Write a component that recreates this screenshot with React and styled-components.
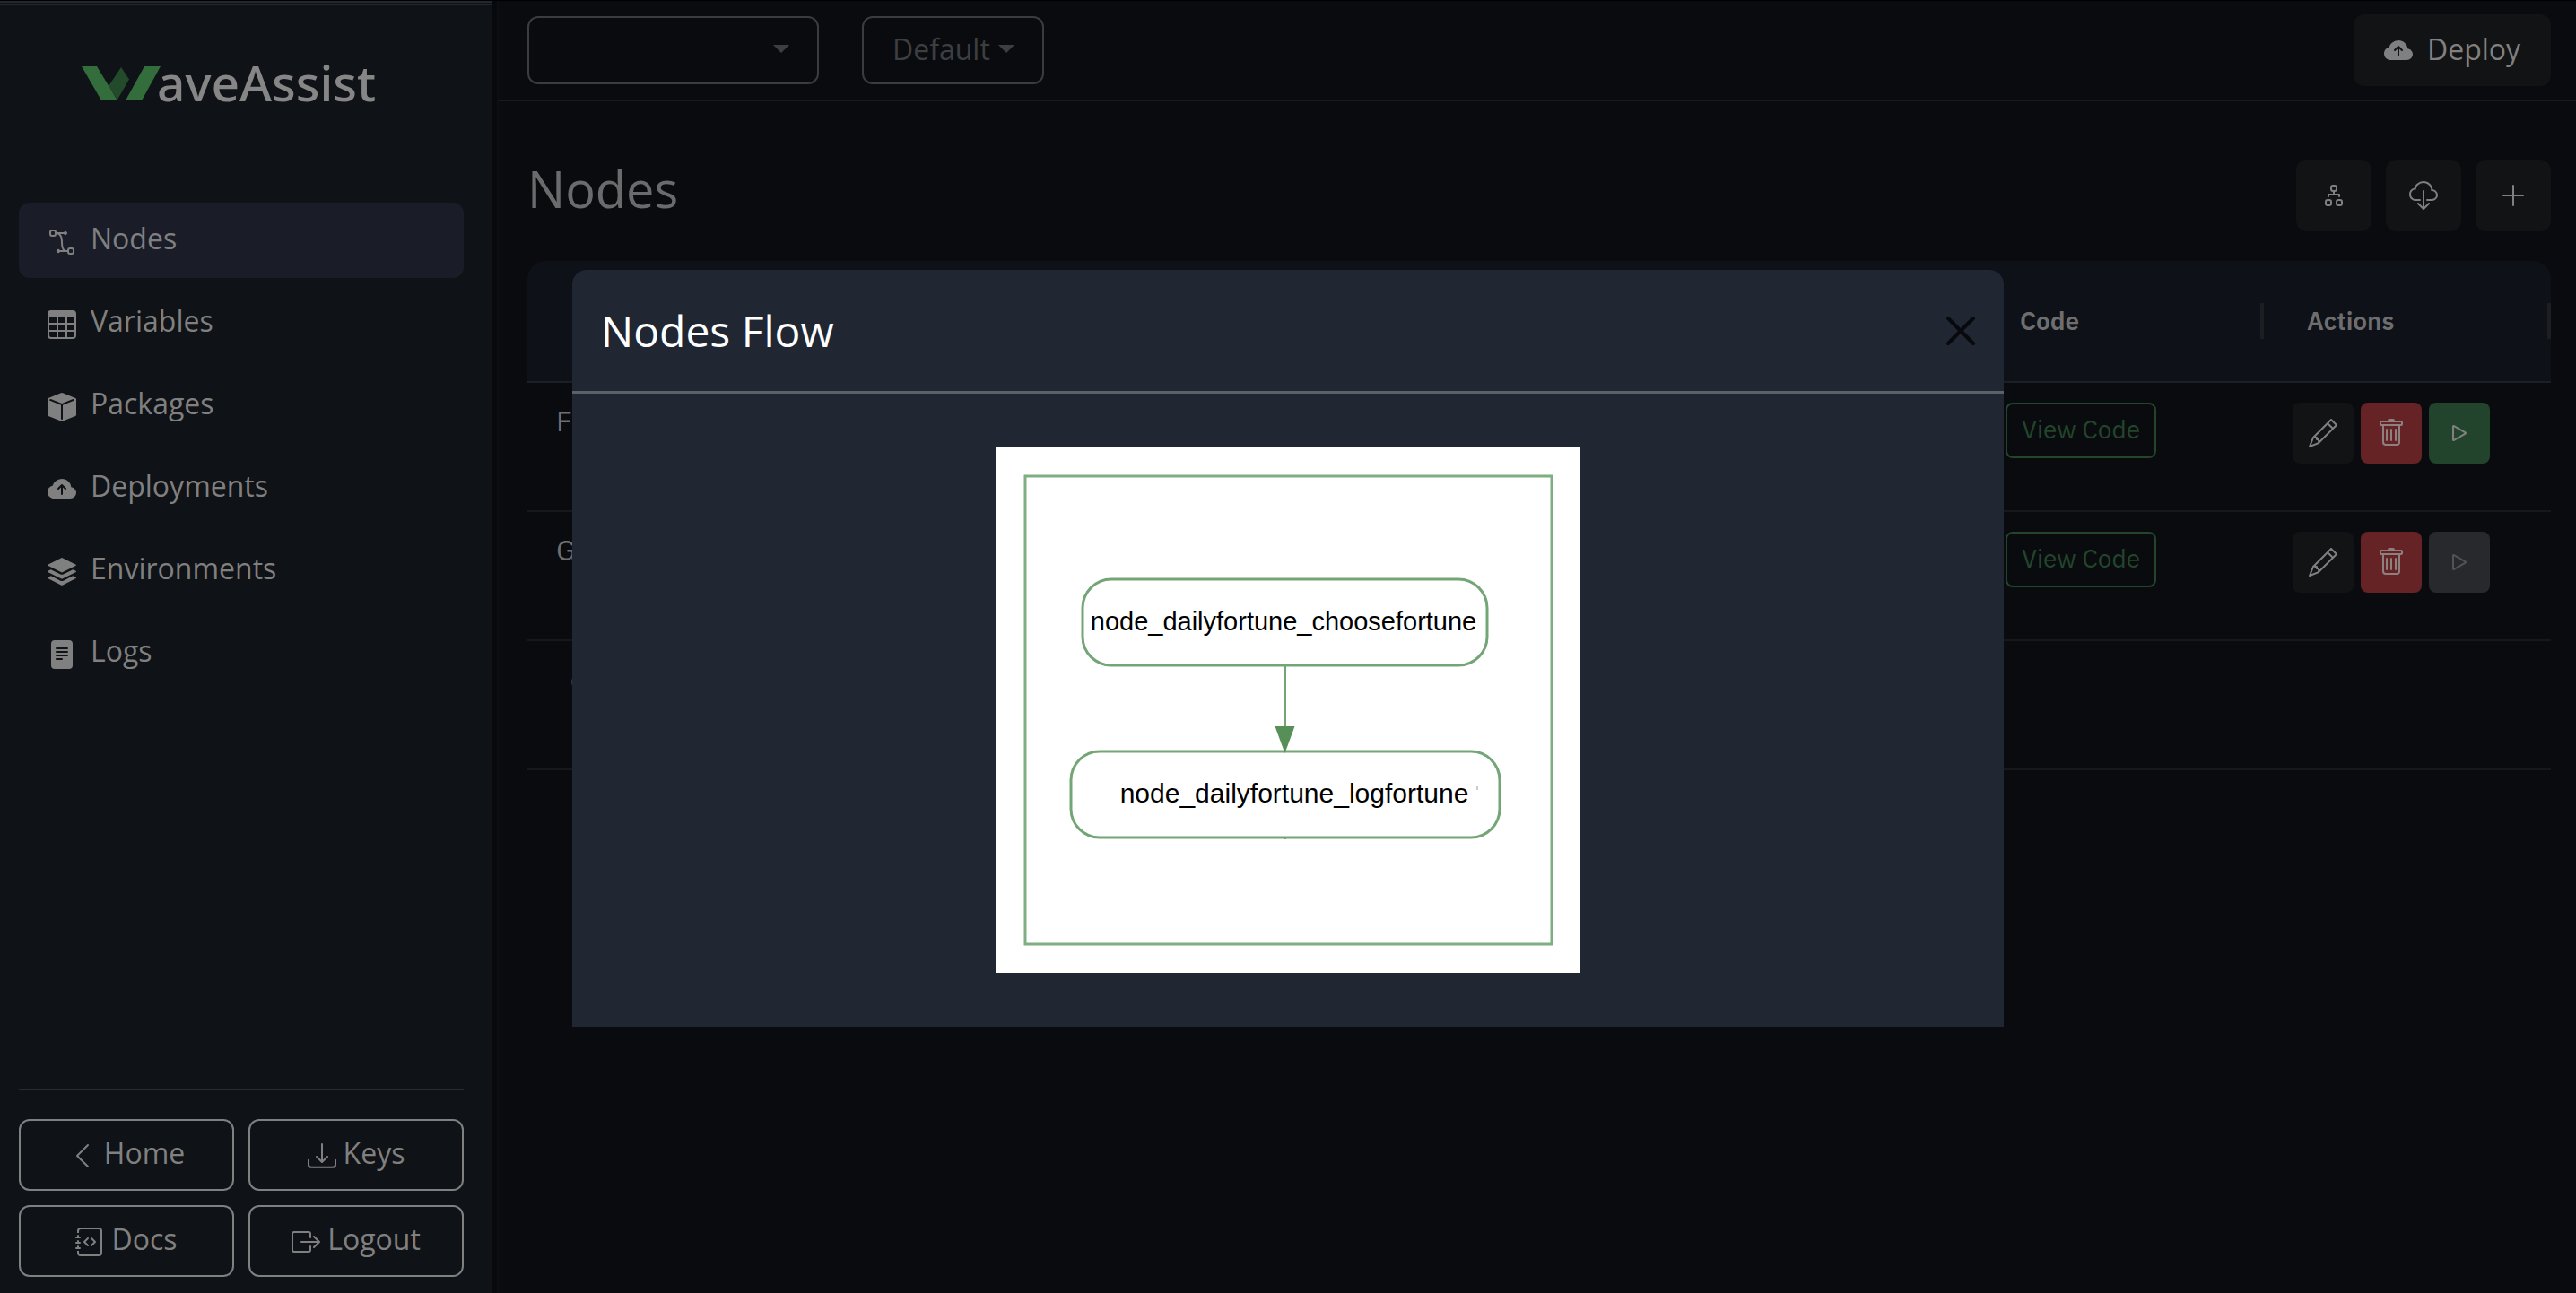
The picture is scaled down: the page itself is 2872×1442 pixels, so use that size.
import React from "react";
import styled, { createGlobalStyle, css } from "styled-components";
import {
  BsBezier2,
  BsTable,
  BsBoxFill,
  BsCloudArrowUpFill,
  BsStack,
  BsFileTextFill,
  BsChevronLeft,
  BsDownload,
  BsJournalCode,
  BsBoxArrowRight,
  BsDiagram2,
  BsCloudDownload,
  BsPlusLg,
  BsPencil,
  BsTrash,
  BsPlay,
} from "react-icons/bs";

const GlobalStyle = createGlobalStyle`
  * { box-sizing: border-box; }
  body { margin: 0; background: #0a0b0e; }
  button, select { font: inherit; color: inherit; }
`;

const Shell = styled.div`
  display: flex;
  min-height: 100vh;
  border-top: 1px solid #000;
  background: #0a0b0e;
  color: #808080;
  font-family: "Open Sans", "Noto Sans", sans-serif;
  font-size: 32px;
  line-height: 48px;
`;

const Sidebar = styled.aside`
  flex: none;
  display: flex;
  flex-direction: column;
  width: 549px;
  padding: 65px 32px 18px 21px;
  border-top: 5px double #24272b;
  background: #0f1216;
`;

const Rail = styled.div`
  flex: none;
  width: 7px;
  background: #08090c;
  border-right: 2px solid #0d0e12;
`;

const Brand = styled.div`
  display: flex;
  align-items: flex-start;
  height: 56px;
  margin: 0 0 99px 70px;
  color: #868686;
  font-family: "Noto Sans", "Open Sans", sans-serif;
  font-size: 55px;
  font-weight: 500;
  line-height: 42px;
`;

const Mark = styled.svg`
  flex: none;
  width: 88px;
  height: 38px;
  margin: 3px -4px 0 0;
`;

const Menu = styled.nav`
  display: flex;
  flex-direction: column;
  gap: 8px;
`;

const MenuLink = styled.a`
  display: flex;
  align-items: center;
  gap: 16px;
  height: 84px;
  padding: 0 32px;
  border-radius: 12px;
  background: ${(p) => (p.$active ? "#1a1d27" : "transparent")};
  color: inherit;
  text-decoration: none;
  svg { flex: none; margin-top: 4px; }
  span { margin-top: -4px; }
`;

const Footer = styled.div`
  display: grid;
  grid-template-columns: 1fr 1fr;
  gap: 16px;
  margin-top: auto;
  padding-top: 32px;
  border-top: 2px solid #2a2c30;
`;

const OutlineButton = styled.button`
  display: flex;
  align-items: center;
  justify-content: center;
  gap: 8px;
  height: 80px;
  padding: 0 0 4px;
  border: 2px solid #808080;
  border-radius: 12px;
  background: transparent;
  svg { flex: none; margin-top: 6px; }
`;

const Main = styled.main`
  flex: 1;
  min-width: 0;
`;

const TopBar = styled.header`
  display: flex;
  align-items: center;
  gap: 48px;
  height: 112px;
  padding: 0 28px 2px 32px;
  border-bottom: 1px solid #181c22;
`;

const Picker = styled.div`
  position: relative;
  display: flex;
  align-items: center;
  width: ${(p) => p.$width};
  height: 76px;
  &::after {
    content: "";
    position: absolute;
    right: 33px;
    top: 32px;
    border: 9px solid transparent;
    border-top-color: #3c3e41;
    border-bottom: 0;
    pointer-events: none;
  }
`;

const Select = styled.select`
  appearance: none;
  width: 100%;
  height: 100%;
  padding: 0 32px 2px;
  border: 2px solid #3a3c3f;
  border-radius: 12px;
  background: transparent;
  color: #3c3e41;
`;

const SolidButton = styled.button`
  display: flex;
  align-items: center;
  justify-content: center;
  gap: 16px;
  width: ${(p) => p.$width};
  height: 80px;
  padding: 0;
  border: 0;
  border-radius: 12px;
  background: #121314;
  color: #808080;
  svg { flex: none; }
`;

const DeployButton = styled(SolidButton)`
  margin-left: auto;
  padding-bottom: 2px;
  svg { margin-top: 4px; }
`;

const Content = styled.section`
  padding: 65px 28px 0 32px;
`;

const TitleRow = styled.div`
  display: flex;
  justify-content: space-between;
  height: 113px;
`;

const Title = styled.h1`
  margin: 0;
  color: #6a6b6c;
  font-size: 56px;
  font-weight: 400;
  line-height: 64px;
`;

const Tools = styled.div`
  display: flex;
  gap: 16px;
`;

const Table = styled.table`
  width: 100%;
  table-layout: fixed;
  border-collapse: separate;
  border-spacing: 0;
  font-family: "IBM Plex Sans", Inter, sans-serif;
  font-size: 28px;
  line-height: 40px;
  color: #6e6e6f;
`;

const HeadCell = styled.th`
  width: ${(p) => p.$width};
  height: 136px;
  padding: 0;
  border-bottom: 2px solid #1c1f25;
  background: #0e1118;
  text-align: left;
  font-weight: 600;
  &:first-child { border-top-left-radius: 20px; }
  &:last-child { border-top-right-radius: 20px; }
  span {
    display: block;
    padding-left: 48px;
    border-right: 4px solid #1c1e22;
  }
`;

const Cell = styled.td`
  height: 144px;
  padding: 22px 32px;
  border-bottom: 2px solid #17181b;
  vertical-align: top;
`;

const NodeName = styled.div`
  padding-left: ${(p) => p.$indent || "0"};
  font-size: 32px;
`;

const ViewButton = styled.button`
  height: 62px;
  padding: 0 16px 2px;
  border: 2px solid #22452c;
  border-radius: 8px;
  background: transparent;
  color: #22452c;
`;

const Actions = styled.div`
  display: flex;
  gap: 8px;
`;

const tones = {
  plain: css`background: #121314; color: #808080;`,
  danger: css`background: #652326; color: #8f8080;`,
  run: css`background: #22432c; color: #808080;`,
  muted: css`background: #28292c; color: #515255;`,
};

const ActionButton = styled.button`
  display: grid;
  place-items: center;
  width: 68px;
  height: 68px;
  padding: 0;
  border: 0;
  border-radius: 8px;
  ${(p) => tones[p.$tone]}
`;

const Backdrop = styled.div`
  position: fixed;
  inset: 0;
  display: flex;
  align-items: flex-start;
  justify-content: center;
  padding: 301px 32px 32px;
`;

const Dialog = styled.div`
  width: 100%;
  max-width: 1596px;
  border-radius: 16px 16px 0 0;
  background: #202632;
  color: #fff;
  font-family: "Open Sans", "Noto Sans", sans-serif;
`;

const DialogHeader = styled.div`
  display: flex;
  align-items: center;
  justify-content: space-between;
  height: 138px;
  padding: 0 32px;
  border-bottom: 3px solid #5c6169;
`;

const DialogTitle = styled.h2`
  margin: 0;
  font-size: 48px;
  font-weight: 400;
  line-height: 64px;
`;

const CloseButton = styled.button`
  display: flex;
  padding: 0;
  border: 0;
  background: transparent;
  color: #07090c;
`;

const DialogBody = styled.div`
  display: flex;
  justify-content: center;
  padding: 60px 32px;
`;

const Flow = styled.svg`
  display: block;
  width: 650px;
  height: 586px;
  background: #fff;
  font-family: "Liberation Sans", sans-serif;
`;

const menu = [
  ["Nodes", BsBezier2],
  ["Variables", BsTable],
  ["Packages", BsBoxFill],
  ["Deployments", BsCloudArrowUpFill],
  ["Environments", BsStack],
  ["Logs", BsFileTextFill],
];

const shortcuts = [
  ["Home", BsChevronLeft],
  ["Keys", BsDownload],
  ["Docs", BsJournalCode],
  ["Logout", BsBoxArrowRight],
];

const rows = [
  { name: "F", run: "run" },
  { name: "G", run: "muted" },
];

function FlowDiagram() {
  return (
    <Flow viewBox="0 0 650 586" role="img" aria-label="Nodes flow">
      <g fill="none" stroke="#74a577" strokeWidth="3">
        <rect x="32" y="32" width="587" height="522" stroke="#7fae82" />
        <rect x="96" y="147" width="451" height="96" rx="32" />
        <rect x="83" y="339" width="478" height="96" rx="32" />
        <path d="M321.500 244V312M321.500 435v2" />
      </g>
      <path d="M310.500 311h22l-11 30z" fill="#568f57" />
      <path d="M536 378v4" stroke="#999" />
      <text x="320" y="204" fontSize="29" textAnchor="middle">node_dailyfortune_choosefortune</text>
      <text x="332" y="396" fontSize="30" textAnchor="middle">node_dailyfortune_logfortune</text>
    </Flow>
  );
}

export default function App() {
  return (
    <>
      <GlobalStyle />
      <Shell>
        <Sidebar>
          <Brand>
            <Mark viewBox="0 0 88 38" aria-hidden="true">
              <path d="M44 1l9 13.500L40 37 30 22z" fill="#234a2b" />
              <path d="M0 0h17l23 38H22z" fill="#346d3c" />
              <path d="M70 0h18L67 38H49z" fill="#346d3c" />
            </Mark>
            aveAssist
          </Brand>
          <Menu>
            {menu.map(([label, Icon], i) => (
              <MenuLink key={label} href="#" $active={i === 0}>
                <Icon size={32} />
                <span>{label}</span>
              </MenuLink>
            ))}
          </Menu>
          <Footer>
            {shortcuts.map(([label, Icon]) => (
              <OutlineButton key={label} type="button">
                <Icon size={32} />
                {label}
              </OutlineButton>
            ))}
          </Footer>
        </Sidebar>
        <Rail />
        <Main>
          <TopBar>
            <Picker $width="325px">
              <Select aria-label="Project" defaultValue="">
                <option value=""></option>
              </Select>
            </Picker>
            <Picker $width="203px">
              <Select aria-label="Environment" defaultValue="Default">
                <option>Default</option>
              </Select>
            </Picker>
            <DeployButton type="button" $width="220px">
              <BsCloudArrowUpFill size={32} />
              Deploy
            </DeployButton>
          </TopBar>
          <Content>
            <TitleRow>
              <Title>Nodes</Title>
              <Tools>
                <SolidButton type="button" $width="84px" aria-label="Show flow">
                  <BsDiagram2 size={32} />
                </SolidButton>
                <SolidButton type="button" $width="84px" aria-label="Download">
                  <BsCloudDownload size={32} />
                </SolidButton>
                <SolidButton type="button" $width="84px" aria-label="Add node">
                  <BsPlusLg size={32} />
                </SolidButton>
              </Tools>
            </TitleRow>
            <Table>
              <thead>
                <tr>
                  <HeadCell aria-label="Name" />
                  <HeadCell $width="320px"><span>Code</span></HeadCell>
                  <HeadCell $width="320px"><span>Actions</span></HeadCell>
                </tr>
              </thead>
              <tbody>
                {rows.map((row) => (
                  <tr key={row.name}>
                    <Cell><NodeName>{row.name}</NodeName></Cell>
                    <Cell><ViewButton type="button">View Code</ViewButton></Cell>
                    <Cell>
                      <Actions>
                        <ActionButton type="button" $tone="plain" aria-label="Edit">
                          <BsPencil size={32} />
                        </ActionButton>
                        <ActionButton type="button" $tone="danger" aria-label="Delete">
                          <BsTrash size={32} />
                        </ActionButton>
                        <ActionButton type="button" $tone={row.run} disabled={row.run === "muted"} aria-label="Run">
                          <BsPlay size={32} />
                        </ActionButton>
                      </Actions>
                    </Cell>
                  </tr>
                ))}
                <tr>
                  <Cell colSpan={3}><NodeName $indent="16px">c</NodeName></Cell>
                </tr>
              </tbody>
            </Table>
          </Content>
        </Main>
      </Shell>
      <Backdrop>
        <Dialog role="dialog" aria-modal="true" aria-labelledby="flow-title">
          <DialogHeader>
            <DialogTitle id="flow-title">Nodes Flow</DialogTitle>
            <CloseButton type="button" aria-label="Close">
              <svg width="32" height="32" viewBox="0 0 32 32" stroke="currentColor" strokeWidth="4" strokeLinecap="round">
                <path d="M2 2l28 28M30 2L2 30" />
              </svg>
            </CloseButton>
          </DialogHeader>
          <DialogBody>
            <FlowDiagram />
          </DialogBody>
        </Dialog>
      </Backdrop>
    </>
  );
}
